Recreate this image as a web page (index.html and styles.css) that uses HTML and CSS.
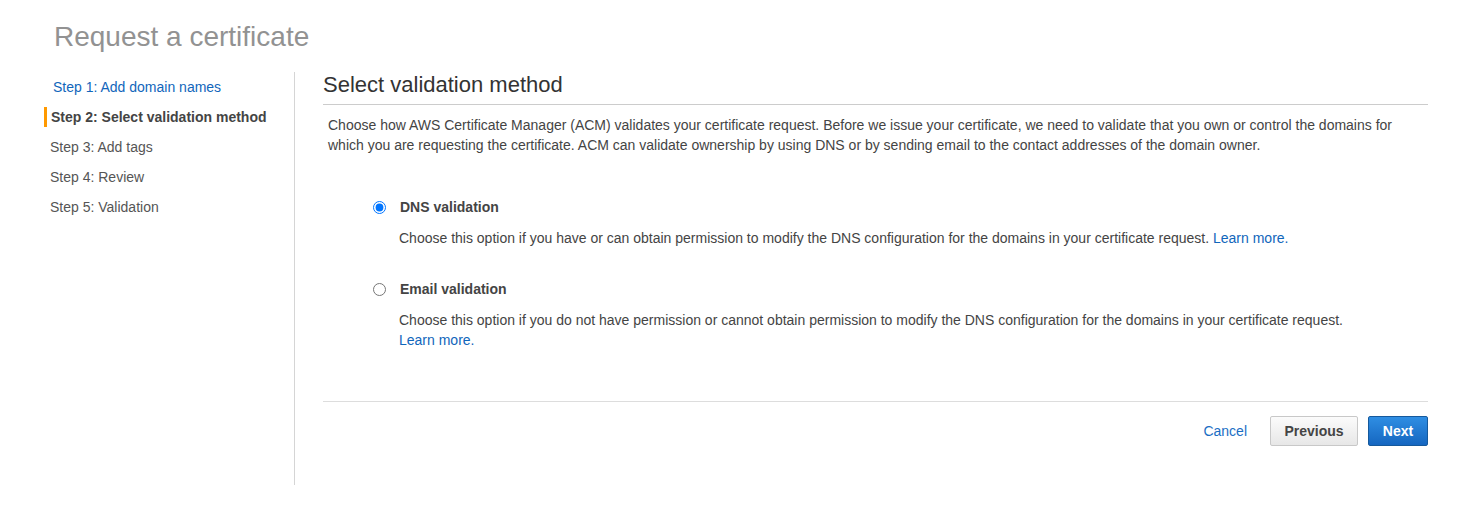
FILE: index.html
```html
<!DOCTYPE html>
<html lang="en">
<head>
<meta charset="utf-8">
<title>Request a certificate</title>
<link rel="stylesheet" href="styles.css">
</head>
<body>
<div class="page">
  <h1 class="title">Request a certificate</h1>
  <div class="layout">
    <nav class="steps">
      <ul class="step-list">
        <li class="step step-link"><a href="#">Step 1: Add domain names</a></li>
        <li class="step step-active">Step 2: Select validation method</li>
        <li class="step">Step 3: Add tags</li>
        <li class="step">Step 4: Review</li>
        <li class="step">Step 5: Validation</li>
      </ul>
    </nav>
    <main class="content">
      <h2 class="heading">Select validation method</h2>
      <p class="intro">Choose how AWS Certificate Manager (ACM) validates your certificate request. Before we issue your certificate, we need to validate that you own or control the domains for which you are requesting the certificate. ACM can validate ownership by using DNS or by sending email to the contact addresses of the domain owner.</p>
      <div class="options">
        <div class="option">
          <label class="option-row"><input class="radio" type="radio" name="method" checked><span class="option-label">DNS validation</span></label>
          <p class="desc">Choose this option if you have or can obtain permission to modify the DNS configuration for the domains in your certificate request. <a href="#">Learn more.</a></p>
        </div>
        <div class="option option-second">
          <label class="option-row"><input class="radio" type="radio" name="method"><span class="option-label">Email validation</span></label>
          <p class="desc">Choose this option if you do not have permission or cannot obtain permission to modify the DNS configuration for the domains in your certificate request. <a href="#">Learn more.</a></p>
        </div>
      </div>
      <div class="footer">
        <a class="cancel" href="#">Cancel</a>
        <button class="btn btn-secondary" type="button">Previous</button>
        <button class="btn btn-primary" type="button">Next</button>
      </div>
    </main>
  </div>
</div>
</body>
</html>
```

FILE: styles.css
```css
* {
  box-sizing: border-box;
}

html, body {
  margin: 0;
  padding: 0;
  background: #ffffff;
}

body {
  font-family: "Liberation Sans", Arial, sans-serif;
  font-size: 14px;
  color: #444444;
}

a {
  color: #1166bb;
  text-decoration: none;
}

.page {
  padding-right: 54px;
}

.title {
  margin: 21px 0 0 54px;
  font-size: 28px;
  line-height: 32px;
  font-weight: normal;
  color: #929292;
}

.layout {
  display: flex;
  margin-top: 19px;
}

.steps {
  width: 295px;
  flex: 0 0 295px;
  border-right: 1px solid #d5d5d5;
}

.step-list {
  list-style: none;
  margin: 0;
  padding: 0 0 0 44px;
}

.step {
  display: flex;
  align-items: center;
  height: 30px;
  padding-left: 6px;
  color: #555555;
}

.step-link {
  padding-left: 9px;
}

.step-active {
  padding-left: 0;
  font-weight: bold;
  color: #444444;
}

.step-active::before {
  content: "";
  display: block;
  width: 3px;
  height: 20px;
  margin-right: 4px;
  background: #ff9900;
}

.content {
  flex: 1;
  padding-left: 28px;
  padding-bottom: 39px;
}

.heading {
  margin: 0;
  font-size: 22px;
  line-height: 26px;
  font-weight: normal;
  color: #333333;
  padding-bottom: 6px;
  border-bottom: 1px solid #cccccc;
}

.intro {
  margin: 10px 0 0;
  padding-left: 5px;
  line-height: 20px;
}

.options {
  margin-top: 42px;
  padding: 0 50px;
}

.option-second {
  margin-top: 31px;
}

.option-row {
  display: flex;
  align-items: center;
  height: 20px;
}

.radio {
  margin: 1px 0 0 0;
  width: 13px;
  height: 13px;
}

.option-label {
  margin-left: 14px;
  font-weight: bold;
  color: #444444;
}

.desc {
  margin: 11px 0 0 26px;
  line-height: 20px;
}

.footer {
  display: flex;
  justify-content: flex-end;
  align-items: center;
  margin-top: 51px;
  padding-top: 14px;
  border-top: 1px solid #dddddd;
}

.cancel {
  margin-right: 23px;
  color: #1a6ec4;
}

.btn {
  height: 30px;
  padding: 0 14px;
  font-family: "Liberation Sans", Arial, sans-serif;
  font-size: 14px;
  font-weight: bold;
  line-height: 28px;
  border-radius: 2px;
  cursor: pointer;
}

.btn-secondary {
  width: 88px;
  padding: 0;
  margin-right: 10px;
  color: #444444;
  border: 1px solid #c8c8c8;
  background: linear-gradient(#fbfbfb, #e7e7e7);
}

.btn-primary {
  width: 60px;
  padding: 0;
  color: #ffffff;
  border: 1px solid #15599c;
  background: linear-gradient(#2f8ee3, #1566c0);
}
```
